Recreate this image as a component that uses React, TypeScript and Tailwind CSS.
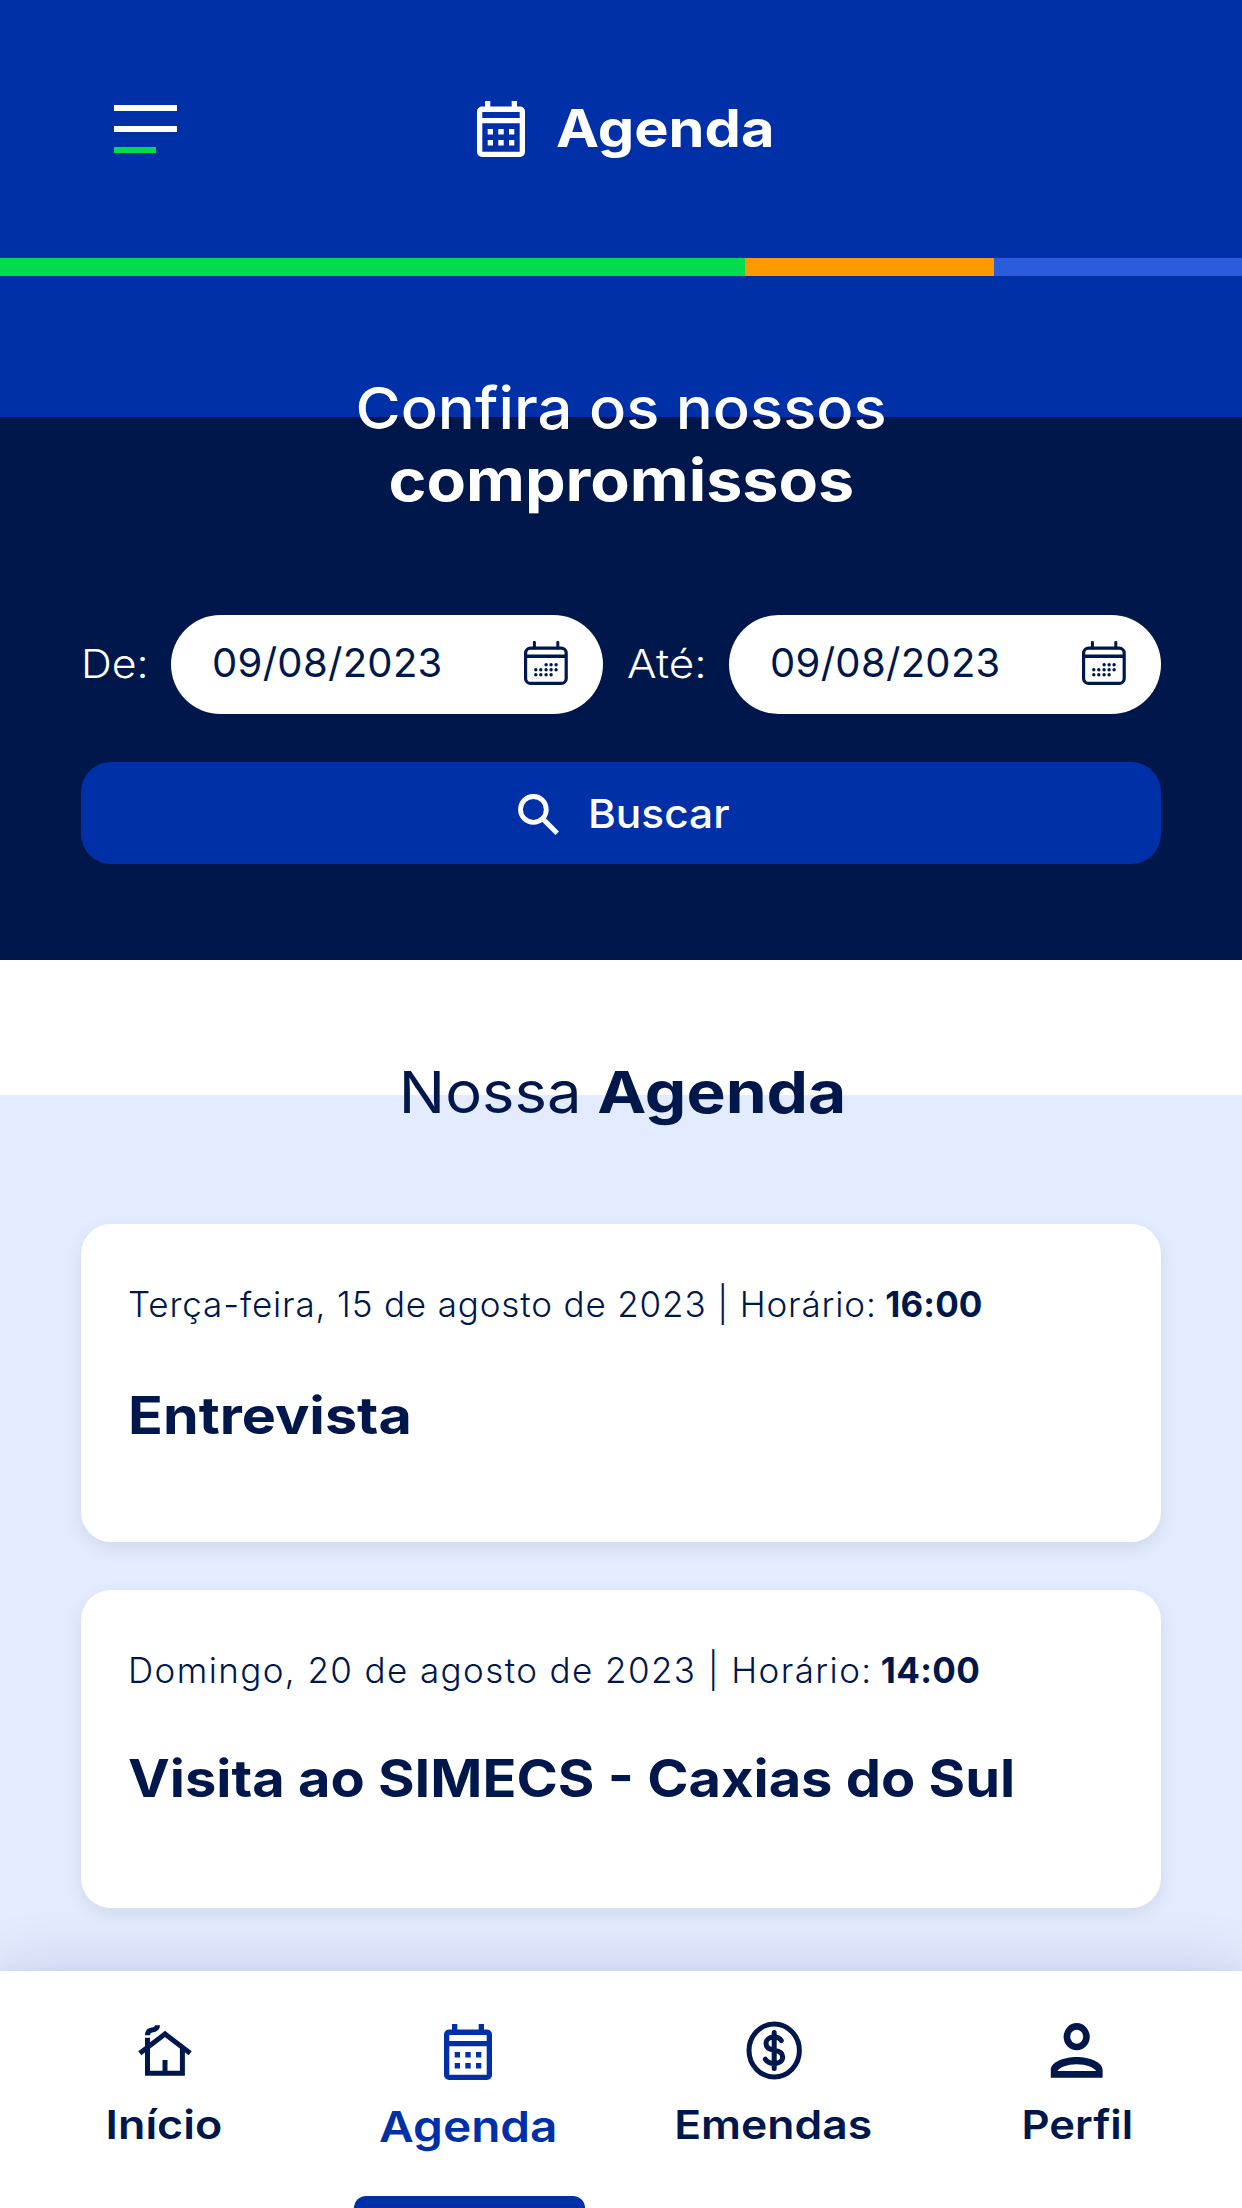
import { useState } from "react";
import type { ReactNode } from "react";

type Tab = "inicio" | "agenda" | "emendas" | "perfil";

interface Appointment {
  id: number;
  date: string;
  time: string;
  title: string;
  dateClass: string;
  timeClass: string;
  titleClass: string;
}

const appointments: Appointment[] = [
  {
    id: 1,
    date: "Terça-feira, 15 de agosto de 2023",
    time: "16:00",
    title: "Entrevista",
    dateClass: "tracking-[0.85px]",
    timeClass: "-ml-0.5 tracking-[0.1px]",
    titleClass: "mt-[55px] scale-x-[1.105]",
  },
  {
    id: 2,
    date: "Domingo, 20 de agosto de 2023",
    time: "14:00",
    title: "Visita ao SIMECS - Caxias do Sul",
    dateClass: "tracking-[1.4px]",
    timeClass: "-ml-[3px] tracking-[0.35px]",
    titleClass: "mt-[52px] scale-x-[1.076]",
  },
];

function CalendarIcon({ className }: { className?: string }) {
  return (
    <svg className={className} width="48" height="56" viewBox="0 0 48 56" fill="currentColor">
      <path
        fillRule="evenodd"
        d="M8 0h5.3v5.6h21.4V0H40v5.6h3a5 5 0 015 5V51a5 5 0 01-5 5H5a5 5 0 01-5-5V10.600a5 5 0 015-5h3zM5.300 11v6h37.400v-6zM5.300 22.300V50.700h37.400V22.300z"
      />
      <path d="M10.700 28H16v5.500h-5.300zM21.300 28h5.400v5.500h-5.400zM32 28h5.300v5.500H32zM10.700 39H16v5.600h-5.300zM21.300 39h5.400v5.600h-5.400zM32 39h5.300v5.600H32z" />
    </svg>
  );
}

const dots = [
  [22.1, 23.7], [27.1, 23.7], [32.1, 23.7],
  [11.8, 28.7], [16.8, 28.7], [22.1, 28.7], [27.1, 28.7], [32.1, 28.7],
  [11.8, 33.7], [16.8, 33.7], [22.1, 33.7], [27.1, 33.7],
];

function DateIcon() {
  return (
    <svg width="44" height="44" viewBox="0 0 44 44" fill="none" stroke="currentColor">
      <path d="M10.400 1.400V7M33.800 1.400V7" strokeWidth="3" strokeLinecap="round" />
      <rect x="1.600" y="7.200" width="40.600" height="35.200" rx="5" strokeWidth="3.200" />
      <path d="M1.600 15.300h40.600" strokeWidth="3.600" />
      {dots.map(([x, y]) => (
        <circle key={`${x}-${y}`} cx={x} cy={y} r="1.700" fill="currentColor" stroke="none" />
      ))}
    </svg>
  );
}

function SearchIcon() {
  return (
    <svg className="mt-[3px]" width="41" height="42" viewBox="0 0 41 42" fill="none" stroke="currentColor">
      <circle cx="15.400" cy="15.400" r="12.900" strokeWidth="4.800" />
      <path d="M25 25l14.200 14.300" strokeWidth="5" />
    </svg>
  );
}

function HomeIcon() {
  return (
    <svg width="60" height="66" viewBox="0 0 60 66" fill="none" stroke="currentColor" strokeWidth="5">
      <path d="M3.800 35.300L29 16l25.200 19.300" />
      <path d="M11.500 19.700v35.600h34.900V29" />
      <path d="M29 42v13" />
      <path d="M11.500 17.300c0-3.800 2-5 4.500-5.300s5.500-1.500 5.500-4.700" />
    </svg>
  );
}

function MoneyIcon() {
  return (
    <svg width="60" height="66" viewBox="0 0 60 66" fill="none" stroke="currentColor" strokeWidth="5">
      <ellipse cx="31.200" cy="32.500" rx="25.200" ry="26.400" />
      <path
        strokeLinecap="round"
        d="M31.200 14.400v36M38.300 22.500c-1.500-2.500-3.800-3.500-7.100-3.500-4.900 0-8.200 2.800-8.200 6.600 0 4.400 3.500 6 8.200 6.700 4.800.7 8.500 2.200 8.500 6.700 0 4-3.700 6.500-8.500 6.500-4.200 0-6.700-1.200-8.900-4.300"
      />
    </svg>
  );
}

function UserIcon() {
  return (
    <svg width="60" height="66" viewBox="0 0 60 66" fill="currentColor">
      <ellipse cx="30.700" cy="18.700" rx="9.800" ry="10.300" fill="none" stroke="currentColor" strokeWidth="6.600" />
      <path
        fillRule="evenodd"
        d="M4.800 59.700V52C4.800 44 18 39 30.700 39S56.600 44 56.600 52v7.700zM11.300 53h38.900C48 49.500 40 46.300 30.700 46.300S13.500 49.500 11.300 53z"
      />
    </svg>
  );
}

function DateField({ value }: { value: string }) {
  return (
    <button className="flex h-[99px] w-[432px] items-center justify-between rounded-full bg-white pr-[35px] pb-[3px] pl-[41px] text-[40px] tracking-[0.3px] text-[#00174c]">
      {value}
      <DateIcon />
    </button>
  );
}

function AppointmentCard({ item }: { item: Appointment }) {
  return (
    <article className="h-[318px] rounded-[30px] bg-white pt-[53px] pl-[47px] shadow-[0_6px_18px_rgba(0,0,0,0.08)]">
      <p className="text-[35px] leading-[54px] font-light">
        <span className={item.dateClass}>{item.date} | Horário: </span>
        <strong className={`font-bold ${item.timeClass}`}>{item.time}</strong>
      </p>
      <h3 className={`w-fit origin-left text-[52px] leading-[60px] font-bold ${item.titleClass}`}>{item.title}</h3>
    </article>
  );
}

const tabs: { id: Tab; label: string; icon: ReactNode; labelClass: string }[] = [
  { id: "inicio", label: "Início", icon: <HomeIcon />, labelClass: "pr-[3px] text-[40px] scale-x-[1.12]" },
  {
    id: "agenda",
    label: "Agenda",
    icon: <CalendarIcon className="mt-1.5 -ml-[3px]" />,
    labelClass: "pt-px pr-0.5 text-[43px] scale-x-[1.11]",
  },
  { id: "emendas", label: "Emendas", icon: <MoneyIcon />, labelClass: "text-[40px] scale-x-[1.11]" },
  { id: "perfil", label: "Perfil", icon: <UserIcon />, labelClass: "pl-0.5 text-[40px] scale-x-[1.09]" },
];

export default function App() {
  const [activeTab, setActiveTab] = useState<Tab>("agenda");

  return (
    <div className="flex h-screen flex-col overflow-hidden bg-[#e3ebff] font-['Inter',sans-serif] text-[#00174c]">
      {/* Header */}
      <header className="flex h-[258px] shrink-0 items-start bg-[#0030a8] pt-[98px] pl-[114px] text-white">
        <button className="mt-[7px] flex w-[63px] flex-col gap-[15px]" aria-label="Menu">
          <span className="h-1.5 w-full bg-white" />
          <span className="h-1.5 w-full bg-white" />
          <span className="h-1.5 w-[42px] bg-[#00dc4b]" />
        </button>
        <CalendarIcon className="mt-[3px] ml-[300px]" />
        <h1 className="ml-[31px] origin-left scale-x-[1.11] text-[52px] leading-[61px] font-bold">Agenda</h1>
      </header>

      <div className="flex h-[18px] shrink-0">
        <div className="w-3/5 bg-[#00dc4b]" />
        <div className="w-1/5 bg-[#ff9900]" />
        <div className="w-1/5 bg-[#2a5cdc]" />
      </div>

      {/* Search */}
      <section className="h-[684px] shrink-0 bg-[linear-gradient(#0030a8_141px,#00174c_141px)] px-[81px] pt-24 text-white">
        <h2 className="text-center text-[58px] leading-[72px]">
          <span className="inline-block scale-x-[1.062] font-medium">Confira os nossos</span>
          <br />
          <strong className="inline-block scale-x-[1.112] font-bold">compromissos</strong>
        </h2>

        <div className="mt-[99px] flex items-center">
          <label className="w-[90px] origin-left scale-x-[1.07] pb-0.5 text-[40px] font-light">De:</label>
          <DateField value="09/08/2023" />
          <label className="ml-6 w-[102px] origin-left scale-x-[1.1] pb-0.5 text-[40px] font-light">Até:</label>
          <DateField value="09/08/2023" />
        </div>

        <button className="mt-12 flex h-[102px] w-full items-center justify-center gap-[29px] rounded-[30px] bg-[#0030a8] pr-[3px] text-[40px] font-medium">
          <SearchIcon />
          <span className="origin-left scale-x-[1.06] pt-0.5">Buscar</span>
        </button>
      </section>

      {/* Appointments */}
      <main className="min-h-0 flex-1 bg-[linear-gradient(#ffffff_135px,#e3ebff_135px)] px-[81px] pt-24">
        <h2 className="flex justify-center gap-[36px] pr-[7px] text-[58px] leading-[72px]">
          <span className="scale-x-[1.06]">Nossa</span>
          <strong className="scale-x-[1.135] font-bold">Agenda</strong>
        </h2>

        <div className="mt-24 flex flex-col gap-12">
          {appointments.map((item) => (
            <AppointmentCard key={item.id} item={item} />
          ))}
        </div>
      </main>

      {/* Bottom navigation */}
      <nav className="relative z-10 grid h-[237px] shrink-0 grid-cols-4 bg-white px-3.5 shadow-[0_0_60px_rgba(0,23,76,0.14),0_0_12px_rgba(0,23,76,0.04)]">
        {tabs.map((tab) => (
          <button
            key={tab.id}
            onClick={() => setActiveTab(tab.id)}
            className={`flex flex-col items-center pt-[47px] font-semibold ${
              activeTab === tab.id ? "text-[#0030a8]" : "text-[#00174c]"
            }`}
          >
            <span className="flex h-[66px] items-start">{tab.icon}</span>
            <span className={`mt-[17px] leading-[48px] ${tab.labelClass}`}>{tab.label}</span>
            {activeTab === tab.id && <span className="mt-auto h-3 w-[231px] rounded-t-[15px] bg-[#0030a8]" />}
          </button>
        ))}
      </nav>
    </div>
  );
}
